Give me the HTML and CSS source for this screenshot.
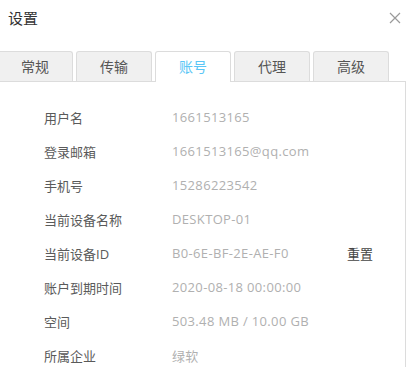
FILE: index.html
```html
<!DOCTYPE html>
<html lang="zh-CN">
<head>
    <meta charset="UTF-8">
    <title>设置</title>
    <link rel="stylesheet" href="styles.css">
</head>
<body>
    <div class="dialog">
        <div class="header">
            <div class="title">设置</div>
            <svg class="close" width="12" height="12" viewBox="0 0 12 12">
                <path d="M1 1 L11 11 M11 1 L1 11" stroke="#9a9a9a" stroke-width="1.2" fill="none"/>
            </svg>
        </div>

        <div class="tabs">
            <div class="tab">常规</div>
            <div class="tab">传输</div>
            <div class="tab active">账号</div>
            <div class="tab">代理</div>
            <div class="tab">高级</div>
        </div>

        <div class="panel">
            <div class="row"><span class="label">用户名</span><span class="value">1661513165</span></div>
            <div class="row"><span class="label">登录邮箱</span><span class="value">1661513165@qq.com</span></div>
            <div class="row"><span class="label">手机号</span><span class="value">15286223542</span></div>
            <div class="row"><span class="label">当前设备名称</span><span class="value">DESKTOP-01</span></div>
            <div class="row"><span class="label">当前设备ID</span><span class="value">B0-6E-BF-2E-AE-F0</span><span class="action">重置</span></div>
            <div class="row"><span class="label">账户到期时间</span><span class="value">2020-08-18 00:00:00</span></div>
            <div class="row"><span class="label">空间</span><span class="value">503.48 MB / 10.00 GB</span></div>
            <div class="row"><span class="label">所属企业</span><span class="value">绿软</span></div>
        </div>
    </div>
</body>
</html>
```

FILE: styles.css
```css
* {
    margin: 0;
    padding: 0;
    box-sizing: border-box;
}

body {
    background: #fff;
    color: #333;
    font-family: "Open Sans", "Noto Sans CJK SC", sans-serif;
    font-size: 13px;
    overflow: hidden;
}

.header {
    height: 51px;
    display: flex;
    justify-content: space-between;
    align-items: flex-start;
    padding: 8px 16px 0 8px;
}

.title {
    font-size: 15px;
    line-height: 20px;
    color: #333;
}

.close {
    margin-top: 4px;
}

.tabs {
    display: flex;
    gap: 3px;
    margin-left: -3px;
    height: 30px;
}

.tab {
    width: 76px;
    height: 31px;
    border: 1px solid #dcdcdc;
    border-bottom: none;
    border-radius: 3px 3px 0 0;
    background: #f0f0f0;
    color: #555;
    font-size: 14px;
    line-height: 29px;
    text-align: center;
    position: relative;
    z-index: 0;
}

.tab.active {
    background: #fff;
    color: #5bc6f6;
    z-index: 2;
}

.panel {
    position: relative;
    z-index: 1;
    margin-left: -3px;
    width: 409px;
    height: 300px;
    border: 1px solid #dcdcdc;
    padding: 18px 0 0 46px;
}

.row {
    display: flex;
    align-items: center;
    height: 34px;
}

.label {
    width: 128px;
    color: #5a5a5a;
}

.value {
    width: 175px;
    color: #b0b0b0;
    letter-spacing: 0.35px;
}

.action {
    color: #444;
}
```
